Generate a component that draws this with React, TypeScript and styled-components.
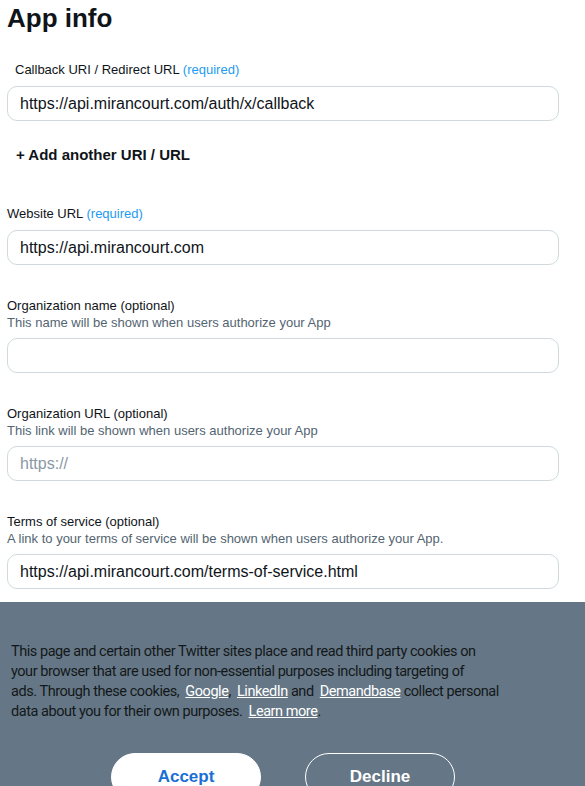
import React from 'react';
import styled, { createGlobalStyle } from 'styled-components';

const GlobalStyle = createGlobalStyle`
  body {
    margin: 0;
    background: #ffffff;
    font-family: "Liberation Sans", Arial, sans-serif;
    color: #0f1419;
  }
`;

const Page = styled.div`
  width: 552px;
  padding: 3px 0 220px 7px;
`;

const Title = styled.h1`
  margin: 0;
  font-size: 26px;
  line-height: 30px;
  font-weight: 700;
`;

const Field = styled.div<{ $first?: boolean }>`
  margin-top: ${(p) => (p.$first ? '28px' : '32px')};
`;

const Label = styled.div<{ $indent?: boolean }>`
  font-size: 13px;
  line-height: 17px;
  margin-left: ${(p) => (p.$indent ? '8px' : '0')};
  margin-bottom: 8px;
`;

const Hint = styled.span`
  color: #1d9bf0;
`;

const LabelWithHelp = styled(Label)`
  margin-bottom: 0;
`;

const Help = styled.div`
  font-size: 13px;
  line-height: 17px;
  color: #536471;
  margin-bottom: 7px;
`;

const Input = styled.input`
  display: block;
  width: 100%;
  height: 35px;
  box-sizing: border-box;
  border: 1px solid #cfd9de;
  border-radius: 10px;
  padding: 0 12px;
  font-family: "Liberation Sans", Arial, sans-serif;
  font-size: 16px;
  color: #0f1419;
  background: #ffffff;
  outline: none;

  &::placeholder {
    color: #8b98a5;
  }
`;

const AddLink = styled.div`
  margin: 25px 0 0 9px;
  font-size: 15px;
  line-height: 18px;
  font-weight: 700;
`;

const WebsiteField = styled.div`
  margin-top: 41px;
`;

const Banner = styled.div`
  position: fixed;
  left: 0;
  right: 0;
  bottom: 0;
  height: 184px;
  box-sizing: border-box;
  padding: 40px 30px 0 11px;
  background: #657786;
`;

const BannerText = styled.p`
  margin: 0;
  font-family: Roboto, "Liberation Sans", sans-serif;
  font-size: 14.5px;
  letter-spacing: -0.45px;
  line-height: 20px;
  white-space: nowrap;
  color: #14171a;
`;

const BannerLink = styled.a`
  color: #ffffff;
  text-decoration: underline;
  margin-left: 3px;
`;

const ButtonRow = styled.div`
  display: flex;
  justify-content: center;
  gap: 44px;
  margin-top: 31px;
`;

const Button = styled.button<{ $primary?: boolean }>`
  width: 150px;
  height: 48px;
  border-radius: 24px;
  border: 1px solid #ffffff;
  background: ${(p) => (p.$primary ? '#ffffff' : 'transparent')};
  color: ${(p) => (p.$primary ? '#1a6fd4' : '#ffffff')};
  font-family: "Liberation Sans", Arial, sans-serif;
  font-size: 17px;
  font-weight: 700;
  cursor: pointer;
`;

export default function App() {
  return (
    <>
      <GlobalStyle />
      <Page>
        <Title>App info</Title>

        <Field $first>
          <Label $indent>
            Callback URI / Redirect URL <Hint>(required)</Hint>
          </Label>
          <Input defaultValue="https://api.mirancourt.com/auth/x/callback" />
        </Field>

        <AddLink>+ Add another URI / URL</AddLink>

        <WebsiteField>
          <Label>
            Website URL <Hint>(required)</Hint>
          </Label>
          <Input defaultValue="https://api.mirancourt.com" />
        </WebsiteField>

        <Field>
          <LabelWithHelp>Organization name (optional)</LabelWithHelp>
          <Help>This name will be shown when users authorize your App</Help>
          <Input />
        </Field>

        <Field>
          <LabelWithHelp>Organization URL (optional)</LabelWithHelp>
          <Help>This link will be shown when users authorize your App</Help>
          <Input placeholder="https://" />
        </Field>

        <Field>
          <LabelWithHelp>Terms of service (optional)</LabelWithHelp>
          <Help>A link to your terms of service will be shown when users authorize your App.</Help>
          <Input defaultValue="https://api.mirancourt.com/terms-of-service.html" />
        </Field>
      </Page>

      <Banner>
        <BannerText>
          This page and certain other Twitter sites place and read third party cookies on
          <br />
          your browser that are used for non-essential purposes including targeting of
          <br />
          ads. Through these cookies, <BannerLink href="#">Google</BannerLink>,{' '}
          <BannerLink href="#">LinkedIn</BannerLink> and <BannerLink href="#">Demandbase</BannerLink>{' '}
          collect personal
          <br />
          data about you for their own purposes. <BannerLink href="#">Learn more</BannerLink>.
        </BannerText>
        <ButtonRow>
          <Button $primary>Accept</Button>
          <Button>Decline</Button>
        </ButtonRow>
      </Banner>
    </>
  );
}
